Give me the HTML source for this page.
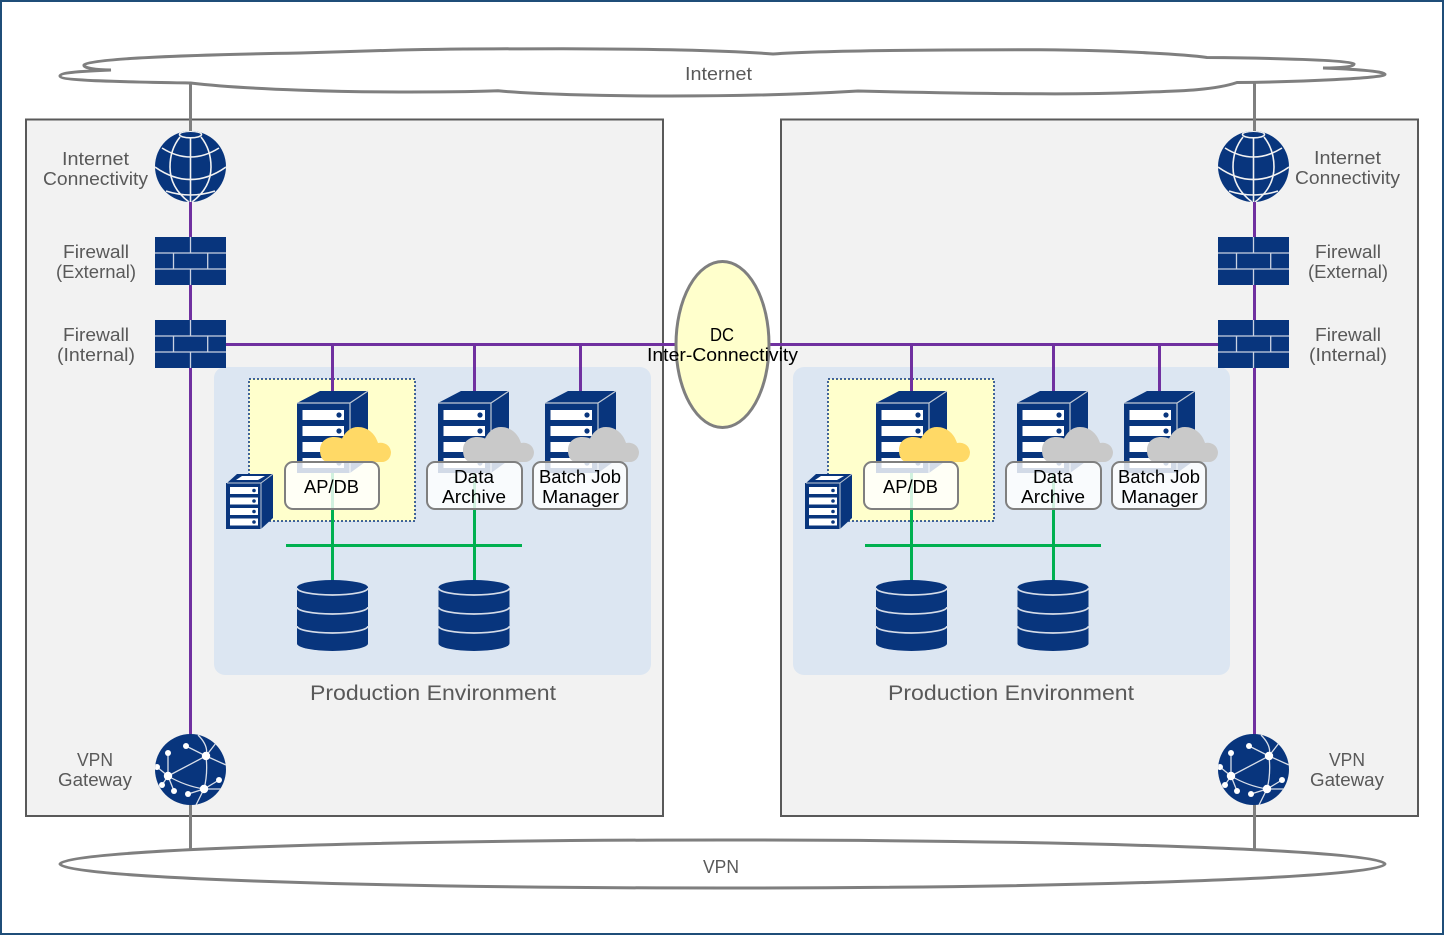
<!DOCTYPE html>
<html><head><meta charset="utf-8"><style>
html,body{margin:0;padding:0;background:#fff}
svg{display:block}
text{font-family:"Liberation Sans",sans-serif}
.g{fill:#595959;font-size:18px}
.k{fill:#000;font-size:18px}
</style></head><body>
<svg width="1444" height="935" viewBox="0 0 1444 935" xmlns="http://www.w3.org/2000/svg">
<defs>
<clipPath id="c"><circle cx="35.5" cy="35.5" r="35.5"/></clipPath>
<g id="globe">
<circle cx="35.5" cy="35.5" r="35.5" fill="#08357d"/>
<g clip-path="url(#c)" fill="none" stroke="#f2f2f2" stroke-width="1.6">
<ellipse cx="35.5" cy="3.5" rx="11" ry="3.3"/>
<path d="M35.5 6V71M7 17Q35.5 35 64 17M0 36Q35.5 61 71 36M11 60Q35.5 68 60 60"/>
<path d="M25 6C17 16 15 26 15 36C15 50 22 62 34 71M46 6C54 16 56 26 56 36C56 50 49 62 37 71"/>
</g></g>
<g id="vpn">
<circle cx="35.5" cy="35.5" r="35.5" fill="#08357d"/>
<g clip-path="url(#c)">
<g fill="none" stroke="#d9dfe9" stroke-width="1.3">
<path d="M13 19V42M31 12L51 22L13 42M2 33L13 42L7 51M13 42L19 57M33 60L49 55L64 46M13 42Q30 52 49 55M43 1Q54 12 51 22Q53 40 49 55M51 22L71 31M51 22L61 9M49 55H71M49 55L41 71"/>
</g>
<g fill="#fff">
<circle cx="13" cy="19" r="3"/><circle cx="31" cy="12" r="3"/><circle cx="51" cy="22" r="4.200"/><circle cx="2" cy="33" r="3"/><circle cx="13" cy="42" r="4.200"/><circle cx="7" cy="51" r="3"/><circle cx="19" cy="57" r="3"/><circle cx="33" cy="60" r="3"/><circle cx="49" cy="55" r="4.200"/><circle cx="64" cy="46" r="3"/>
</g></g></g>
<g id="fw">
<rect width="71" height="48" fill="#08357d"/>
<path d="M0 16H71M0 32H71M35.5 0V16M18.5 16V32M52.7 16V32M35.5 32V48" fill="none" stroke="#c9d2e2" stroke-width="1.3"/>
</g>
<g id="srv">
<path d="M0 12L23 0H71L53 12Z" fill="#08357d"/>
<path d="M53 12L71 0V69L53 82Z" fill="#08357d"/>
<rect x="0" y="12" width="53" height="70" fill="#08357d"/>
<path d="M0 12H53V82M53 12L71 0" fill="none" stroke="#c2cbd6" stroke-width="1.2"/>
<g fill="#fff"><rect x="5.5" y="19" width="41.500" height="10"/><rect x="5.5" y="35" width="41.500" height="10"/><rect x="5.5" y="51" width="41.500" height="10"/><rect x="5.500" y="67" width="41.500" height="10"/></g>
<g fill="#08357d"><circle cx="42" cy="24" r="2.600"/><circle cx="42" cy="40" r="2.600"/><circle cx="42" cy="56" r="2.600"/><circle cx="42" cy="72" r="2.600"/></g>
</g>
<g id="srvs">
<path d="M1 9L11 0H47L35 9Z" fill="#08357d"/>
<path d="M10 6L16 2H39L32 6Z" fill="#fff"/>
<path d="M35 9L47 0V44L35 55Z" fill="#08357d"/>
<rect x="0" y="9" width="35" height="46" fill="#08357d"/>
<path d="M1 9H35V55M35 9L47 0" fill="none" stroke="#c2cbd6" stroke-width="1"/>
<g fill="#fff"><rect x="4" y="13" width="28" height="7"/><rect x="4" y="23.500" width="28" height="7"/><rect x="4" y="34" width="28" height="7"/><rect x="4" y="44.500" width="28" height="7"/></g>
<g fill="#08357d"><circle cx="28" cy="16.500" r="1.800"/><circle cx="28" cy="27" r="1.800"/><circle cx="28" cy="37.500" r="1.800"/><circle cx="28" cy="48" r="1.800"/></g>
</g>
<g id="db">
<path d="M0 7.500A35.500 7.500 0 0 1 71 7.500V63.500A35.500 7.500 0 0 1 0 63.500Z" fill="#08357d"/>
<path d="M0 8A35.500 7 0 0 0 71 8M0 27A35.500 7 0 0 0 71 27M0 46A35.500 7 0 0 0 71 46" fill="none" stroke="#d5dce8" stroke-width="1.700"/>
</g>
<path id="cloud" d="M9 35C2 35 0 29 0 23C0 15 6 10 14 10C17 10 20 10.500 22 11.500C26 4 31 0 38 0C47 0 55 6 58 16C61 15 70 16 71 25C71 31 67 35 62 35Z"/>
<g id="env">
<rect x="214" y="367" width="437" height="308" rx="11" fill="#dce6f2"/>
<rect x="249" y="379" width="166" height="142" fill="#ffffcc" stroke="#08357d" stroke-width="1.500" stroke-dasharray="2 2"/>
<path d="M332.500 345V392M474.500 345V392M580.500 345V392" stroke="#7030a0" stroke-width="3" fill="none"/>
<use href="#srv" x="297" y="391"/>
<use href="#srv" x="438" y="391"/>
<use href="#srv" x="545" y="391"/>
<use href="#cloud" x="320" y="427" fill="#ffd966"/>
<use href="#cloud" x="463" y="427" fill="#c9c9c9"/>
<use href="#cloud" x="568" y="427" fill="#c9c9c9"/>
<path d="M286 545.500H522M332.500 473V581M474.500 473V581" stroke="#00b050" stroke-width="3" fill="none"/>
<use href="#srvs" x="226" y="474"/>
<use href="#db" x="297" y="580"/>
<use href="#db" x="438.500" y="580"/>
<g fill="#fff" fill-opacity=".82" stroke="#7f7f7f" stroke-width="2">
<rect x="285" y="462" width="94" height="47" rx="8"/>
<rect x="427" y="462" width="95" height="47" rx="8"/>
<rect x="533" y="462" width="94" height="47" rx="8"/>
</g>
</g>
</defs>

<rect x="1" y="1" width="1442" height="933" fill="#fff" stroke="#1f4e79" stroke-width="2"/>
<rect x="26" y="119.500" width="637" height="696.500" fill="#f2f2f2" stroke="#595959" stroke-width="2"/>
<rect x="781" y="119.500" width="637" height="696.500" fill="#f2f2f2" stroke="#595959" stroke-width="2"/>

<path d="M190.500 83V135M190.500 800V850M1254.500 83V135M1254.500 800V850" stroke="#7f7f7f" stroke-width="3" fill="none"/>

<path d="M111 70C96 70 83 68 84 65C86 59 180 55 300 53C340 52 360 51 400 50C450 49 520 48.700 563 48.700C650 49 720 50 773 54C820 50.500 930 49.700 1040 49.700C1080 50 1120 51 1150 53C1170 54 1190 55 1207 57.500C1270 58 1350 60 1354 64C1354 67 1340 68 1323 68C1350 69 1385 71 1385 74.500C1385 78 1300 82 1237 82.500C1215 90 1180 91 1150 92C1110 93.500 1070 94 1040 93.800C970 93.500 900 92 858 91C800 94.500 730 96 670 96C600 96 530 94 498 90.800C470 92 430 92 400 92C350 92 250 90 190.500 83C130 82 60 81 60 76C60 72 90 71 111 70Z" fill="#fff" stroke="#7f7f7f" stroke-width="3"/>
<ellipse cx="722.500" cy="864" rx="662.500" ry="24" fill="#fff" stroke="#7f7f7f" stroke-width="3"/>

<path d="M190.500 200V737M1254.500 200V737M226 344.500H1218" stroke="#7030a0" stroke-width="3" fill="none"/>

<use href="#env"/>
<use href="#env" x="579"/>

<use href="#globe" x="155" y="131"/><use href="#globe" x="1218" y="131"/>
<use href="#fw" x="155" y="237"/><use href="#fw" x="155" y="320"/>
<use href="#fw" x="1218" y="237"/><use href="#fw" x="1218" y="320"/>
<use href="#vpn" x="155" y="734"/><use href="#vpn" x="1218" y="734"/>

<ellipse cx="722.500" cy="344.500" rx="46.500" ry="83" fill="#ffffcc" stroke="#7f7f7f" stroke-width="3"/>

<g class="g">
<text x="685" y="80" textLength="67" lengthAdjust="spacingAndGlyphs">Internet</text>
<text x="703" y="873" textLength="36" lengthAdjust="spacingAndGlyphs">VPN</text>
<text x="62" y="165" textLength="67" lengthAdjust="spacingAndGlyphs">Internet</text>
<text x="43" y="185" textLength="105" lengthAdjust="spacingAndGlyphs">Connectivity</text>
<text x="63" y="258" textLength="66" lengthAdjust="spacingAndGlyphs">Firewall</text>
<text x="56" y="278" textLength="80" lengthAdjust="spacingAndGlyphs">(External)</text>
<text x="63" y="341" textLength="66" lengthAdjust="spacingAndGlyphs">Firewall</text>
<text x="57" y="361" textLength="78" lengthAdjust="spacingAndGlyphs">(Internal)</text>
<text x="77" y="766" textLength="36" lengthAdjust="spacingAndGlyphs">VPN</text>
<text x="58" y="786" textLength="74" lengthAdjust="spacingAndGlyphs">Gateway</text>
<text x="1314" y="164" textLength="67" lengthAdjust="spacingAndGlyphs">Internet</text>
<text x="1295" y="184" textLength="105" lengthAdjust="spacingAndGlyphs">Connectivity</text>
<text x="1315" y="258" textLength="66" lengthAdjust="spacingAndGlyphs">Firewall</text>
<text x="1308" y="278" textLength="80" lengthAdjust="spacingAndGlyphs">(External)</text>
<text x="1315" y="341" textLength="66" lengthAdjust="spacingAndGlyphs">Firewall</text>
<text x="1309" y="361" textLength="78" lengthAdjust="spacingAndGlyphs">(Internal)</text>
<text x="1329" y="766" textLength="36" lengthAdjust="spacingAndGlyphs">VPN</text>
<text x="1310" y="786" textLength="74" lengthAdjust="spacingAndGlyphs">Gateway</text>
<text x="310" y="700" textLength="246" lengthAdjust="spacingAndGlyphs" style="font-size:21px">Production Environment</text>
<text x="888" y="700" textLength="246" lengthAdjust="spacingAndGlyphs" style="font-size:21px">Production Environment</text>
</g>
<g class="k">
<text x="710" y="341" textLength="24" lengthAdjust="spacingAndGlyphs">DC</text>
<text x="647" y="361" textLength="151" lengthAdjust="spacingAndGlyphs">Inter-Connectivity</text>
<text x="304" y="493" textLength="55" lengthAdjust="spacingAndGlyphs">AP/DB</text>
<text x="454" y="483" textLength="40" lengthAdjust="spacingAndGlyphs">Data</text>
<text x="442" y="503" textLength="64" lengthAdjust="spacingAndGlyphs">Archive</text>
<text x="539" y="483" textLength="82" lengthAdjust="spacingAndGlyphs">Batch Job</text>
<text x="542" y="503" textLength="77" lengthAdjust="spacingAndGlyphs">Manager</text>
<text x="883" y="493" textLength="55" lengthAdjust="spacingAndGlyphs">AP/DB</text>
<text x="1033" y="483" textLength="40" lengthAdjust="spacingAndGlyphs">Data</text>
<text x="1021" y="503" textLength="64" lengthAdjust="spacingAndGlyphs">Archive</text>
<text x="1118" y="483" textLength="82" lengthAdjust="spacingAndGlyphs">Batch Job</text>
<text x="1121" y="503" textLength="77" lengthAdjust="spacingAndGlyphs">Manager</text>
</g>
</svg>
</body></html>
